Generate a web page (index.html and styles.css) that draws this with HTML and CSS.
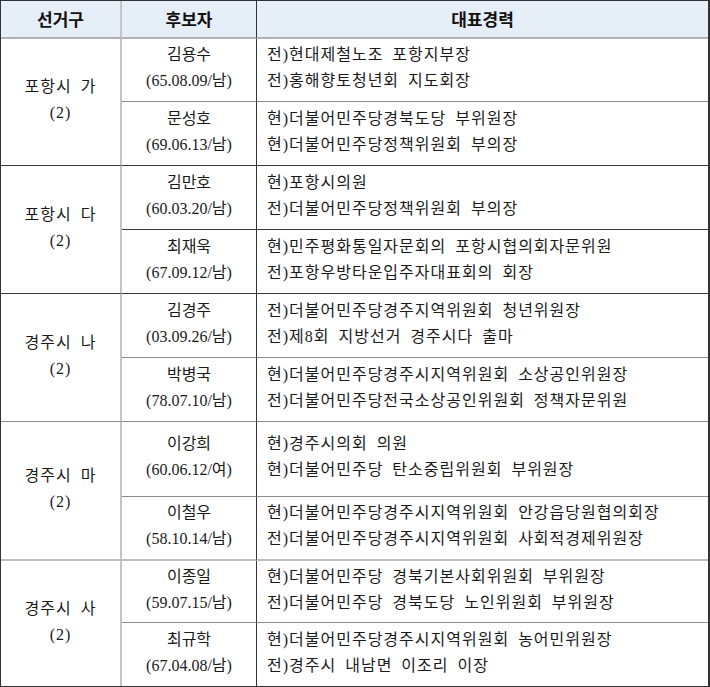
FILE: index.html
```html
<!DOCTYPE html>
<html lang="ko">
<head>
<meta charset="utf-8">
<title>후보자 대표경력</title>
<link rel="stylesheet" href="styles.css">
</head>
<body>
<table class="tbl">
  <colgroup>
    <col class="c1">
    <col class="c2">
    <col class="c3">
  </colgroup>
  <thead>
    <tr class="head">
      <th class="district">선거구</th>
      <th class="cand">후보자</th>
      <th class="career">대표경력</th>
    </tr>
  </thead>
  <tbody>
    <tr class="h63">
      <td class="district sep-dark" rowspan="2">포항시 가<br>(2)</td>
      <td class="cand sep-mid">김용수<br>(65.08.09/남)</td>
      <td class="career sep-mid">전)현대제철노조 포항지부장<br>전)홍해향토청년회 지도회장</td>
    </tr>
    <tr class="h64">
      <td class="cand sep-dark">문성호<br>(69.06.13/남)</td>
      <td class="career sep-dark">현)더불어민주당경북도당 부위원장<br>현)더불어민주당정책위원회 부의장</td>
    </tr>

    <tr class="h64">
      <td class="district sep-dark" rowspan="2">포항시 다<br>(2)</td>
      <td class="cand sep-dark">김만호<br>(60.03.20/남)</td>
      <td class="career sep-dark">현)포항시의원<br>전)더불어민주당정책위원회 부의장</td>
    </tr>
    <tr class="h64">
      <td class="cand sep-dark">최재욱<br>(67.09.12/남)</td>
      <td class="career sep-dark">현)민주평화통일자문회의 포항시협의회자문위원<br>전)포항우방타운입주자대표회의 회장</td>
    </tr>

    <tr class="h64">
      <td class="district sep-mid" rowspan="2">경주시 나<br>(2)</td>
      <td class="cand sep-mid">김경주<br>(03.09.26/남)</td>
      <td class="career sep-mid">전)더불어민주당경주지역위원회 청년위원장<br>전)제8회 지방선거 경주시다 출마</td>
    </tr>
    <tr class="h64">
      <td class="cand sep-mid">박병국<br>(78.07.10/남)</td>
      <td class="career sep-mid">현)더불어민주당경주시지역위원회 소상공인위원장<br>전)더불어민주당전국소상공인위원회 정책자문위원</td>
    </tr>

    <tr class="h75">
      <td class="district sep-light" rowspan="2">경주시 마<br>(2)</td>
      <td class="cand sep-mid">이강희<br>(60.06.12/여)</td>
      <td class="career sep-mid">현)경주시의회 의원<br>현)더불어민주당 탄소중립위원회 부위원장</td>
    </tr>
    <tr class="h64">
      <td class="cand sep-light">이철우<br>(58.10.14/남)</td>
      <td class="career sep-light">현)더불어민주당경주시지역위원회 안강읍당원협의회장<br>전)더불어민주당경주시지역위원회 사회적경제위원장</td>
    </tr>

    <tr class="h62">
      <td class="district" rowspan="2">경주시 사<br>(2)</td>
      <td class="cand sep-mid">이종일<br>(59.07.15/남)</td>
      <td class="career sep-mid">현)더불어민주당 경북기본사회위원회 부위원장<br>전)더불어민주당 경북도당 노인위원회 부위원장</td>
    </tr>
    <tr class="h63">
      <td class="cand">최규학<br>(67.04.08/남)</td>
      <td class="career">현)더불어민주당경주시지역위원회 농어민위원장<br>전)경주시 내남면 이조리 이장</td>
    </tr>
  </tbody>
</table>
</body>
</html>
```

FILE: styles.css
```css
html, body {
  margin: 0;
  padding: 0;
  background: #ffffff;
}

.tbl {
  width: 710px;
  table-layout: fixed;
  border-collapse: separate;
  border-spacing: 0;
  border: 1px solid #333333;
  border-right-width: 2px;
  font-family: "Liberation Serif", "Noto Sans CJK KR", serif;
  font-size: 16px;
  color: #1a1a1a;
}

.c1 { width: 121px; }
.c2 { width: 135px; }
.c3 { width: 451px; }

.tbl th,
.tbl td {
  box-sizing: border-box;
  padding: 0;
  vertical-align: middle;
}

.head th {
  height: 38px;
  background: #e6eef8;
  border-bottom: 2px solid #aeb1b6;
  font-family: "Noto Sans CJK KR", "Noto Sans", sans-serif;
  font-weight: 700;
  font-size: 17px;
  color: #111111;
  text-align: center;
  line-height: 20px;
  padding-bottom: 1px;
}

.tbl td {
  line-height: 26px;
  padding-bottom: 4px;
}

.tbl .district {
  text-align: center;
  border-right: 2px solid #c4c4c4;
}

.tbl td.district {
  letter-spacing: 1px;
  word-spacing: 4px;
}

.tbl .cand {
  text-align: center;
  border-right: 1px solid #333333;
}

.tbl td.career {
  text-align: left;
  padding-left: 10px;
  white-space: nowrap;
  letter-spacing: 1px;
  word-spacing: 4px;
}

.h62 { height: 62px; }
.h63 { height: 63px; }
.h64 { height: 64px; }
.h75 { height: 75px; }

.tbl td.sep-dark { border-bottom: 1px solid #3a3a3a; }
.tbl td.sep-mid { border-bottom: 1px solid #8c8c8c; }
.tbl td.sep-light { border-bottom: 2px solid #bdbdbd; }
```
